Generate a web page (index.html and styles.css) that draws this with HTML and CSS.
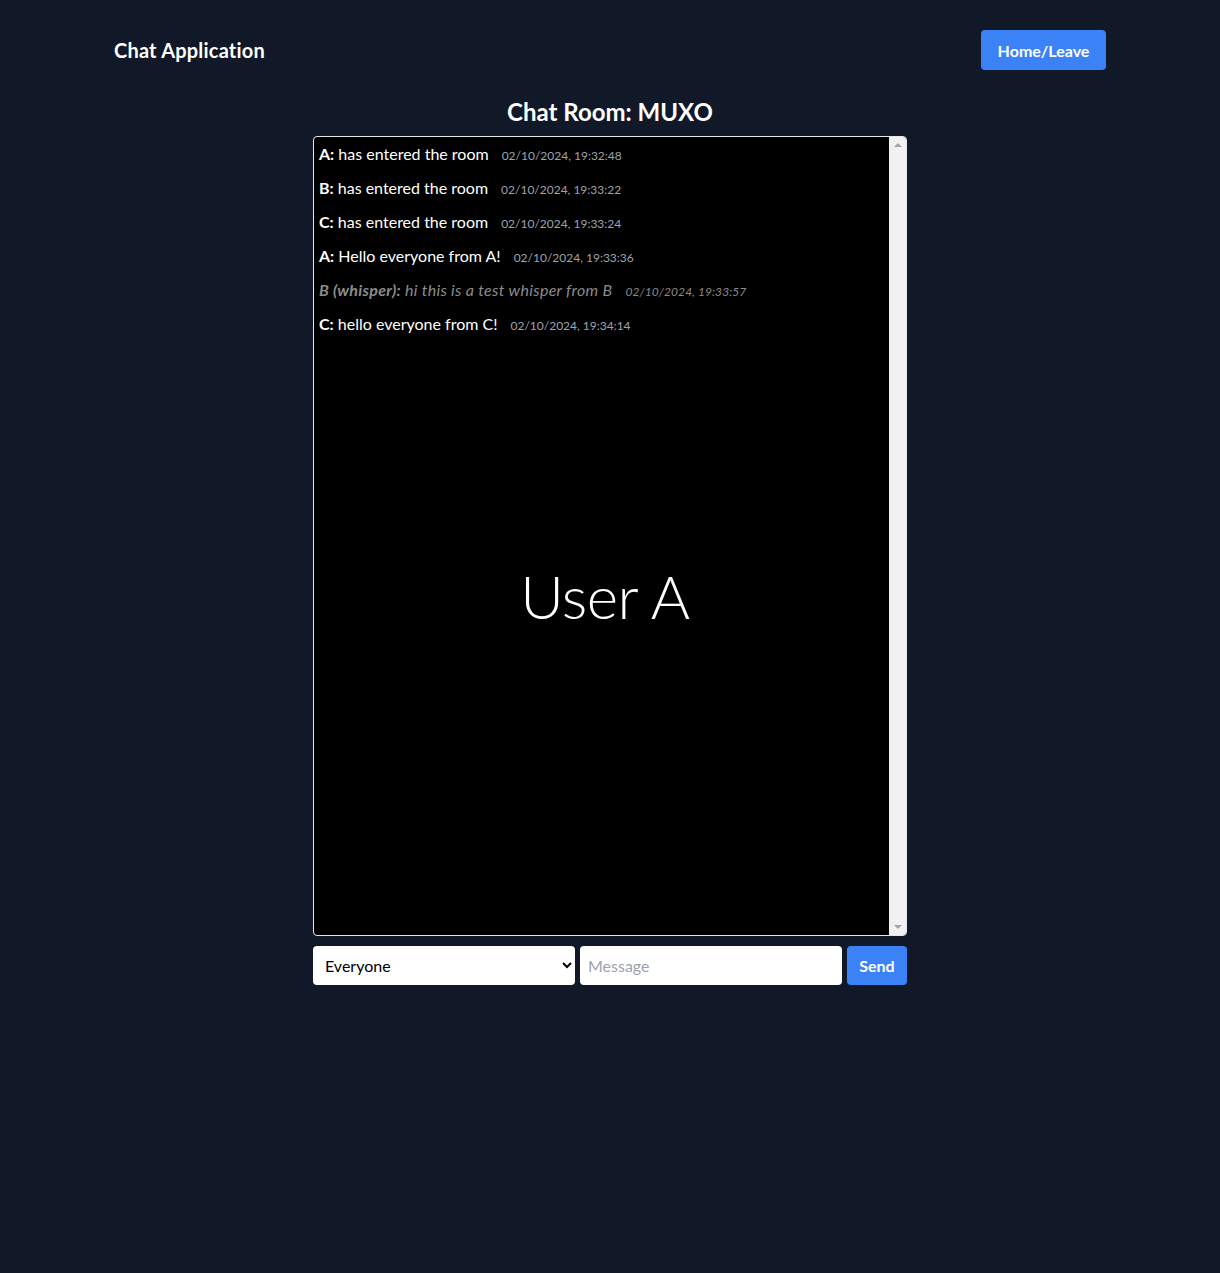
FILE: index.html
```html
<!DOCTYPE html>
<html lang="en">
<head>
<meta charset="utf-8">
<title>Chat Application</title>
<link rel="stylesheet" href="styles.css">
</head>
<body>
<div class="page">
  <header class="header">
    <h1 class="brand">Chat Application</h1>
    <button class="btn btn-leave">Home/Leave</button>
  </header>
  <main class="room">
    <h2 class="room-title">Chat Room: MUXO</h2>
    <div class="chat-wrap">
      <div class="chat-box">
        <div class="messages">
          <div class="msg"><span class="who">A:</span> has entered the room<span class="time">02/10/2024, 19:32:48</span></div>
          <div class="msg"><span class="who">B:</span> has entered the room<span class="time">02/10/2024, 19:33:22</span></div>
          <div class="msg"><span class="who">C:</span> has entered the room<span class="time">02/10/2024, 19:33:24</span></div>
          <div class="msg"><span class="who">A:</span> Hello everyone from A!<span class="time">02/10/2024, 19:33:36</span></div>
          <div class="msg whisper"><span class="who">B (whisper):</span> hi this is a test whisper from B<span class="time">02/10/2024, 19:33:57</span></div>
          <div class="msg"><span class="who">C:</span> hello everyone from C!<span class="time">02/10/2024, 19:34:14</span></div>
        </div>
        <div class="scrollbar">
          <span class="arrow arrow-up"></span>
          <span class="arrow arrow-down"></span>
        </div>
      </div>
      <div class="user-label">User A</div>
    </div>
    <form class="composer">
      <select class="field select">
        <option>Everyone</option>
      </select>
      <input class="field input" type="text" placeholder="Message">
      <button type="button" class="btn btn-send">Send</button>
    </form>
  </main>
</div>
</body>
</html>
```
FILE: styles.css
```css
* { box-sizing: border-box; }
html, body {
  margin: 0;
  background: #111827;
  color: #ffffff;
  font-family: "Lato", "Open Sans", sans-serif;
  height: 100%;
}
.page {
  max-width: 992px;
  margin: 0 auto;
}
.header {
  display: flex;
  justify-content: space-between;
  align-items: center;
  padding-top: 30px;
}
.brand {
  margin: 0;
  font-size: 20px;
  font-weight: 700;
  letter-spacing: 0.2px;
}
.btn {
  background: #3b82f6;
  color: #fff;
  border: none;
  border-radius: 4px;
  font-family: inherit;
  font-weight: 700;
  font-size: 16px;
  cursor: pointer;
}
.btn-leave {
  width: 125px;
  height: 40px;
}
.room {
  width: 594px;
  margin: 0 auto;
}
.room-title {
  margin: 27px 0 9px;
  text-align: center;
  font-size: 24px;
  font-weight: 700;
  line-height: 30px;
}
.chat-wrap {
  position: relative;
}
.chat-box {
  display: flex;
  height: 800px;
  background: #000;
  border: 1px solid #e5e7eb;
  border-radius: 4px;
  overflow: hidden;
}
.messages {
  flex: 1;
  min-width: 0;
}
.scrollbar {
  width: 17px;
  background: #f1f1f1;
  display: flex;
  flex-direction: column;
  justify-content: space-between;
  align-items: center;
  padding: 6px 0;
}
.arrow {
  width: 0;
  height: 0;
  border-left: 4px solid transparent;
  border-right: 4px solid transparent;
}
.arrow-up { border-bottom: 4px solid #a3a3a3; }
.arrow-down { border-top: 4px solid #a3a3a3; }
.msg {
  height: 34px;
  line-height: 34px;
  padding-left: 5px;
  font-size: 16px;
  white-space: nowrap;
}
.who { font-weight: 700; }
.time {
  margin-left: 13px;
  font-size: 12px;
  color: #9ca3af;
}
.whisper {
  color: #8b8b8b;
  font-style: italic;
  letter-spacing: 0.3px;
}
.whisper .time { color: #8b8b8b; letter-spacing: 0.1px; }
.user-label {
  position: absolute;
  left: 0;
  right: 10px;
  top: 428px;
  text-align: center;
  font-size: 60px;
  font-weight: 300;
  line-height: 64px;
  letter-spacing: -0.5px;
  pointer-events: none;
}
.composer {
  display: flex;
  gap: 5px;
  margin-top: 10px;
}
.field {
  height: 39px;
  border: none;
  border-radius: 4px;
  background: #fff;
  font-family: inherit;
  font-size: 16px;
}
.select {
  width: 262px;
  padding: 0 8px;
  color: #000;
}
.input {
  width: 262px;
  padding: 0 8px;
}
.input::placeholder { color: #9ca3af; }
.btn-send {
  width: 60px;
  height: 39px;
}
```
